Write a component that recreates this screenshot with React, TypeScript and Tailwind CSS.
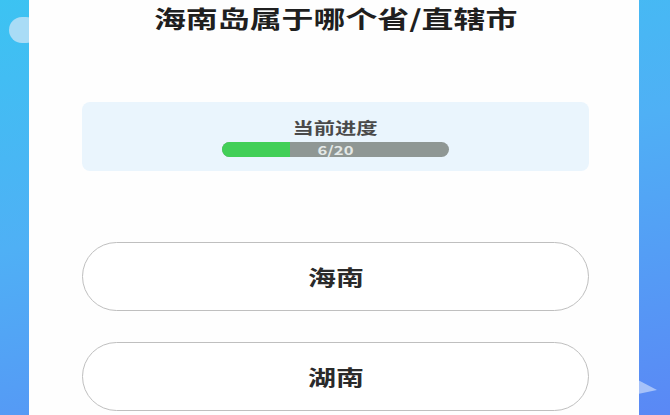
import React from 'react';

const options = ['海南', '湖南'];

// the source screenshot is stretched sideways, so text is widened to match
const Wide: React.FC<{ children: React.ReactNode; className?: string }> = ({ children, className }) => (
  <span className={`inline-block scale-x-[1.33] whitespace-nowrap ${className ?? ''}`}>{children}</span>
);

const App: React.FC = () => {
  const current = 6;
  const total = 20;
  const pct = (current / total) * 100;

  return (
    <div
      className="relative w-[670px] h-[415px] overflow-hidden bg-[linear-gradient(168deg,#3cc3f2_0%,#4fb0f5_45%,#5a88f5_100%)]"
      style={{ fontFamily: '"Noto Sans CJK SC", "Noto Sans", sans-serif' }}
    >
      {/* decorations behind the card */}
      <div className="absolute left-[9px] top-[17px] w-[30px] h-[26px] rounded-full bg-[#a9dcf6]" />
      <svg className="absolute left-[638px] top-[378px]" width="22" height="18" viewBox="0 0 22 18">
        <polygon points="0,2 19,12 0,16" fill="#b9cffa" opacity="0.8" />
      </svg>

      <div className="relative ml-[29px] w-[610px] h-full bg-[#fefefe] flex flex-col pl-[53px] pr-[50px]">
        <div className="h-[36px] flex items-center justify-center">
          <Wide className="text-[24px] font-bold text-[#1f1f1f] leading-none">海南岛属于哪个省/直辖市</Wide>
        </div>

        <div className="mt-[66px] h-[69px] rounded-lg bg-[#eaf5fd] flex flex-col items-center pt-[16px]">
          <Wide className="text-[16px] font-bold text-[#4a4a4a] leading-[18px]">当前进度</Wide>
          <div className="relative mt-[6px] w-[227px] h-[15px] rounded-full bg-[#8f9794]">
            <div className="h-full bg-[#42cf57] rounded-l-full" style={{ width: `${pct}%` }} />
            <div className="absolute inset-0 flex items-center justify-center">
              <Wide className="text-[12.5px] font-bold text-[#e4e9e7] leading-[15px]">
                {current}/{total}
              </Wide>
            </div>
          </div>
        </div>

        <div className="mt-[71px] flex flex-col gap-[31px]">
          {options.map((o) => (
            <button
              key={o}
              className="h-[69px] w-full rounded-full border-[1.5px] border-[#bfbfbf] bg-white flex items-center justify-center"
            >
              <Wide className="text-[21px] font-bold text-[#2a2a2a] leading-none">{o}</Wide>
            </button>
          ))}
        </div>
      </div>
    </div>
  );
};

export default App;
